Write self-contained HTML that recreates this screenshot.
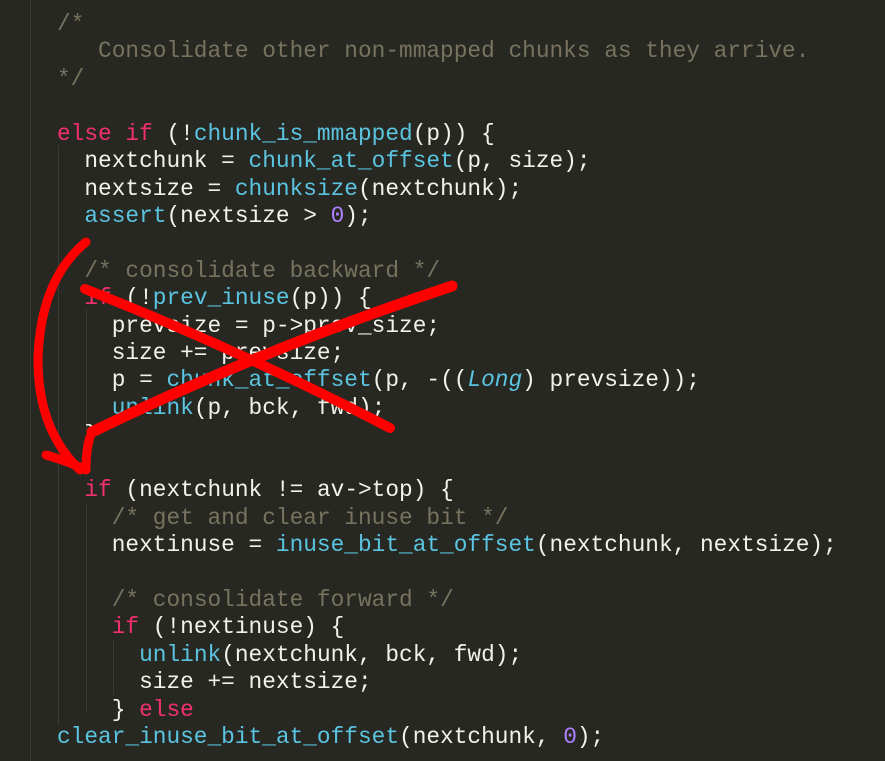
<!DOCTYPE html>
<html><head><meta charset="utf-8"><style>
html,body{margin:0;padding:0;width:885px;height:761px;overflow:hidden;background:#272822;}
pre{position:absolute;left:57px;top:11px;margin:0;font-family:"Liberation Mono",monospace;font-size:22.8px;line-height:27.42px;color:#f2f2ea;}
.k{color:#f0306e}.f{color:#5bc4e0}.c{color:#77735f}.n{color:#ae81ff}.i{font-style:italic;color:#5bc4e0}
.g{position:absolute;width:1px;background:#3a3b35;}
</style></head><body>
<div class="g" style="left:30px;top:0;height:761px"></div>
<div class="g" style="left:58px;top:145px;height:580px"></div>
<div class="g" style="left:86px;top:310px;height:120px"></div>
<div class="g" style="left:86px;top:503px;height:210px"></div>
<div class="g" style="left:113px;top:640px;height:55px"></div>
<pre><span class="c">/*
   Consolidate other non-mmapped chunks as they arrive.
*/</span>

<span class="k">else if</span> (!<span class="f">chunk_is_mmapped</span>(p)) {
  nextchunk = <span class="f">chunk_at_offset</span>(p, size);
  nextsize = <span class="f">chunksize</span>(nextchunk);
  <span class="f">assert</span>(nextsize &gt; <span class="n">0</span>);

  <span class="c">/* consolidate backward */</span>
  <span class="k">if</span> (!<span class="f">prev_inuse</span>(p)) {
    prevsize = p-&gt;prev_size;
    size += prevsize;
    p = <span class="f">chunk_at_offset</span>(p, -((<span class="i">Long</span>) prevsize));
    <span class="f">unlink</span>(p, bck, fwd);
  }

  <span class="k">if</span> (nextchunk != av-&gt;top) {
    <span class="c">/* get and clear inuse bit */</span>
    nextinuse = <span class="f">inuse_bit_at_offset</span>(nextchunk, nextsize);

    <span class="c">/* consolidate forward */</span>
    <span class="k">if</span> (!nextinuse) {
      <span class="f">unlink</span>(nextchunk, bck, fwd);
      size += nextsize;
    } <span class="k">else</span>
<span class="f">clear_inuse_bit_at_offset</span>(nextchunk, <span class="n">0</span>);</pre>
<svg width="885" height="761" style="position:absolute;left:0;top:0" fill="none" stroke="#ff0000" stroke-linecap="round" stroke-linejoin="round">
<path d="M85 289 Q240 350 390 428" stroke-width="10"/>
<path d="M452 286 Q260 350 92 432" stroke-width="11"/>
<path d="M86 242 Q40 280 38 360 Q38 430 80 470" stroke-width="9"/>
<path d="M46 455 Q70 462 86 470 Q86 450 90 437" stroke-width="9"/>
</svg>
</body></html>
